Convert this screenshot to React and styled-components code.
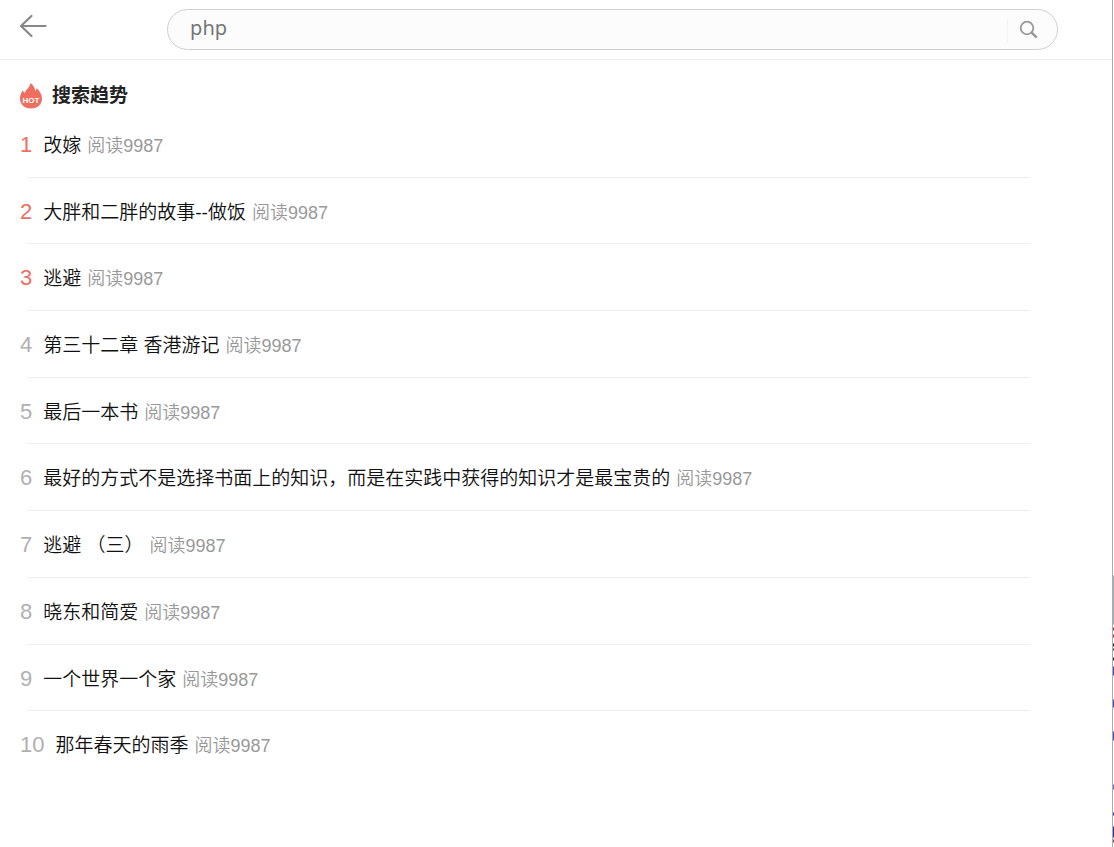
import React, { useState } from "react";
import styled, { createGlobalStyle } from "styled-components";

const GlobalStyle = createGlobalStyle`
  * {
    box-sizing: border-box;
  }
  body {
    margin: 0;
    background: #fff;
    color: #222;
    font-family: "Liberation Sans", "Noto Sans CJK SC", sans-serif;
  }
`;

const Page = styled.div`
  position: relative;
  min-height: 100vh;
`;

const Header = styled.header`
  display: flex;
  align-items: center;
  height: 60px;
  border-bottom: 1px solid #ededed;
`;

const BackArea = styled.div`
  flex: 0 0 15%;
  padding: 0 0 4px 19px;
`;

const BackLink = styled.a`
  display: inline-flex;
  color: #888;
`;

const SearchForm = styled.form`
  display: flex;
  align-items: center;
  flex: 0 0 80%;
  height: 41px;
  border: 1px solid #cfcfcf;
  border-radius: 21px;
  background: #fcfcfc;
  overflow: hidden;
`;

const SearchInput = styled.input`
  flex: 1;
  min-width: 0;
  height: 100%;
  padding: 0 22px 4px;
  border: none;
  outline: none;
  background: transparent;
  color: #757575;
  font-family: "Noto Sans", "Noto Sans CJK SC", sans-serif;
  font-size: 20px;
`;

const SearchButton = styled.button`
  display: flex;
  align-items: center;
  width: 50px;
  height: 24px;
  padding: 0 0 0 11px;
  border: none;
  border-left: 1px solid #f4f4f4;
  background: transparent;
  color: #999;
  cursor: pointer;
`;

const Heading = styled.h1`
  display: flex;
  align-items: center;
  gap: 10px;
  margin: 0;
  padding: 21px 20px 0;
  font-size: 19px;
  line-height: 30px;
  font-weight: bold;
`;

const List = styled.ol`
  display: grid;
  grid-auto-rows: 1fr;
  min-height: 667px;
  margin: 0;
  padding: 0;
  list-style: none;
`;

const Item = styled.li`
  display: flex;
  flex-direction: column;

  &:not(:last-child)::after {
    content: "";
    width: 90%;
    margin-left: 27px;
    border-bottom: 1px solid #eee;
  }
`;

const ItemLink = styled.a`
  display: flex;
  flex: 1;
  align-items: baseline;
  padding: 19px 20px 0;
  color: #111;
  font-size: 19px;
  line-height: 30px;
  text-decoration: none;
`;

const Rank = styled.span`
  margin-right: 11px;
  color: ${(props) => (props.$hot ? "#ee6e5f" : "#b0b0b0")};
  font-size: 22px;
`;

const Title = styled.span`
  font-weight: 350;
`;

const Reads = styled.span`
  margin-left: 6px;
  color: #999;
  font-size: 18px;
  font-weight: 350;
`;

// sliver of the neighbouring window along the right side
const Edge = styled.div`
  position: absolute;
  top: 0;
  right: 0;
  bottom: 0;
  width: 2px;
  border-left: 1px solid #aaa;
  background: linear-gradient(
    #fff 575px,
    #9db0be 576px 624px,
    #fff 625px 627px,
    #b04040 628px 630px,
    #fff 631px 634px,
    #b04040 635px 637px,
    #fff 638px 643px,
    #333 644px 646px,
    #fff 647px 648px,
    #333 649px 650px,
    #fff 651px 657px,
    #333 658px 660px,
    #fff 661px 666px,
    #4646dd 667px 675px,
    #fff 676px 699px,
    #4646dd 700px 707px,
    #fff 708px 731px,
    #4646dd 732px 740px,
    #fff 741px 784px,
    #6a6add 785px 789px,
    #fff 790px 812px,
    #3636dd 813px 815px,
    #fff 816px 826px,
    #2b2bcc 827px 837px,
    #fff 838px 839px,
    #b04040 840px 842px,
    #fff 843px
  );
`;

const trends = [
  { title: "改嫁", reads: 9987 },
  { title: "大胖和二胖的故事--做饭", reads: 9987 },
  { title: "逃避", reads: 9987 },
  { title: "第三十二章 香港游记", reads: 9987 },
  { title: "最后一本书", reads: 9987 },
  {
    title: "最好的方式不是选择书面上的知识，而是在实践中获得的知识才是最宝贵的",
    reads: 9987,
  },
  { title: "逃避 （三）", reads: 9987 },
  { title: "晓东和简爱", reads: 9987 },
  { title: "一个世界一个家", reads: 9987 },
  { title: "那年春天的雨季", reads: 9987 },
];

const BackIcon = () => (
  <svg width="28" height="24" viewBox="0 0 28 24" fill="none" stroke="currentColor" strokeWidth="2.200" strokeLinecap="round" strokeLinejoin="round" aria-hidden="true">
    <path d="M26.500 12H2M12.500 2L2 12l10.500 10" />
  </svg>
);

const SearchIcon = () => (
  <svg width="20" height="20" viewBox="0 0 20 20" fill="none" stroke="currentColor" aria-hidden="true">
    <circle cx="8" cy="8" r="6.300" strokeWidth="1.800" />
    <path d="M12.700 12.700l5 5" strokeWidth="2.600" />
  </svg>
);

const HotIcon = () => (
  <svg width="22" height="26" viewBox="0 0 22 26" aria-hidden="true">
    <path
      d="M10.500 0C13 2 15 4.500 15.300 8c.9-.7 1.300-1.700 1.400-2.900C19.500 8 22 11.500 22 15.500 22 21.500 17.500 25.500 11 25.500S0 21.500 0 15.500c0-3.500 1.200-6 3-8.500.2 1.400.7 2.300 1.600 3C6 6.500 9.800 4.500 10.500 0z"
      fill="#ee6e5f"
    />
    <text x="11" y="20" fill="#fff" fontFamily="Liberation Sans, sans-serif" fontSize="8" fontWeight="bold" textAnchor="middle">
      HOT
    </text>
  </svg>
);

const App = () => {
  const [keyword, setKeyword] = useState("");

  return (
    <>
      <GlobalStyle />
      <Page>
        <Header>
          <BackArea>
            <BackLink href="#" aria-label="返回">
              <BackIcon />
            </BackLink>
          </BackArea>
          <SearchForm role="search" onSubmit={(e) => e.preventDefault()}>
            <SearchInput
              type="text"
              aria-label="搜索"
              placeholder="php"
              value={keyword}
              onChange={(e) => setKeyword(e.target.value)}
            />
            <SearchButton type="submit" aria-label="搜索">
              <SearchIcon />
            </SearchButton>
          </SearchForm>
        </Header>
        <main>
          <Heading>
            <HotIcon />
            搜索趋势
          </Heading>
          <List>
            {trends.map((item, index) => (
              <Item key={item.title}>
                <ItemLink href="#">
                  <Rank $hot={index < 3}>{index + 1}</Rank>
                  <Title>{item.title}</Title>
                  <Reads>阅读{item.reads}</Reads>
                </ItemLink>
              </Item>
            ))}
          </List>
        </main>
        <Edge aria-hidden="true" />
      </Page>
    </>
  );
};

export default App;
